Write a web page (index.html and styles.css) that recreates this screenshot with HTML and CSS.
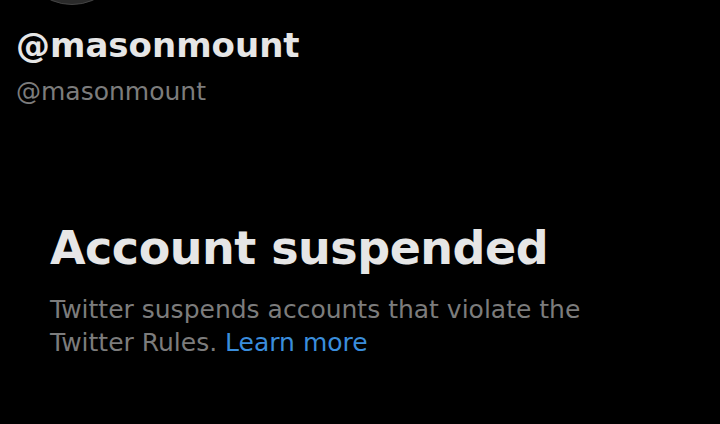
FILE: index.html
```html
<!DOCTYPE html>
<html lang="en">
<head>
    <meta charset="UTF-8">
    <meta name="viewport" content="width=device-width, initial-scale=1.0">
    <title>@masonmount</title>
    <link rel="stylesheet" href="styles.css">
</head>
<body>
    <div class="profile">
        <div class="avatar"></div>
        <div class="display-name">@masonmount</div>
        <div class="handle">@masonmount</div>
    </div>
    <div class="notice">
        <h1>Account suspended</h1>
        <p>Twitter suspends accounts that violate the Twitter Rules. <a href="#">Learn more</a></p>
    </div>
</body>
</html>
```

FILE: styles.css
```css
body {
    margin: 0;
    background-color: #000;
    color: #e6e6e6;
    font-family: "DejaVu Sans", "Liberation Sans", sans-serif;
}
.profile {
    padding-left: 16px;
}
.avatar {
    box-sizing: border-box;
    width: 106px;
    height: 106px;
    margin: -101px 0 0 3px;
    border-radius: 50%;
    background-color: #2a2a2a;
    border: 1px solid #444;
}
.display-name {
    margin-top: 20px;
    font-size: 34px;
    line-height: 40px;
    font-weight: bold;
}
.handle {
    margin-top: 12px;
    font-size: 25px;
    line-height: 30px;
    color: #7c7c7c;
}
.notice {
    padding: 114px 0 0 50px;
}
.notice h1 {
    margin: 0;
    font-size: 46px;
    line-height: 54px;
    font-weight: bold;
    letter-spacing: -0.5px;
}
.notice p {
    margin: 18px 0 0;
    max-width: 560px;
    font-size: 25px;
    line-height: 33px;
    color: #7c7c7c;
}
.notice a {
    color: #3a8ddc;
    text-decoration: none;
}
```
